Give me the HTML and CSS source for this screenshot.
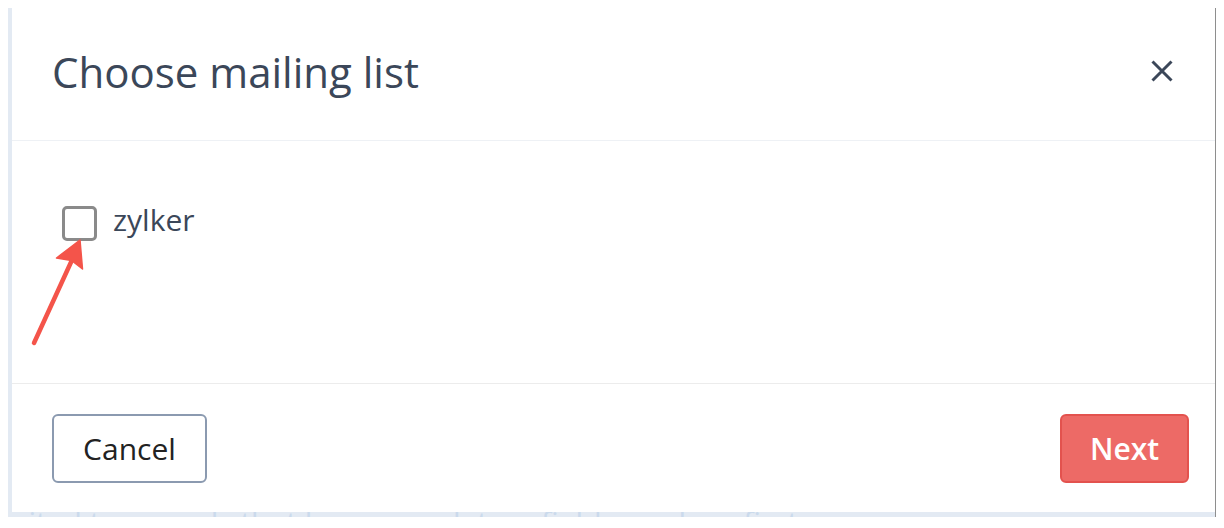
FILE: index.html
```html
<!DOCTYPE html>
<html>
<head>
<meta charset="utf-8">
<link rel="stylesheet" href="styles.css">
</head>
<body>
<div class="frame">
  <div class="page">
    <p class="page-text">nited to records that have mandatory fields, such as first name</p>
  </div>
  <div class="modal">
    <div class="modal-header">
      <h1 class="modal-title">Choose mailing list</h1>
      <svg class="close" width="24" height="24" viewBox="0 0 24 24" aria-label="Close">
        <path d="M2.5 2.5 L21.5 21.5 M21.5 2.5 L2.5 21.5" stroke="#3b4759" stroke-width="3" fill="none"/>
      </svg>
    </div>
    <div class="modal-body">
      <label class="option">
        <span class="checkbox"></span>
        <span class="option-label">zylker</span>
      </label>
    </div>
    <div class="modal-footer">
      <button class="btn btn-cancel">Cancel</button>
      <button class="btn btn-next">Next</button>
    </div>
  </div>
</div>
<svg class="annot" width="120" height="360" viewBox="0 0 120 360">
  <path d="M34 343 L72 260" stroke="#f4544a" stroke-width="4.5" stroke-linecap="round" fill="none"/>
  <polygon points="80,240 56.5,258 71.5,260.5 82.5,269" fill="#f4544a" stroke="#f4544a" stroke-width="1.5" stroke-linejoin="round"/>
</svg>
</body>
</html>
```

FILE: styles.css
```css
html, body {
  background: #ffffff;
}
body {
  margin: 8px;
  font-family: "Open Sans", "Liberation Sans", sans-serif;
}
.frame {
  position: relative;
  width: 1207px;
  height: 509px;
  overflow: hidden;
  background: #e3eaf3;
  box-shadow: 0 0 0 1px #8e8e8e, 0 1px 7px 1px rgba(0, 0, 0, 0.45);
}
.page {
  padding-top: 493px;
  padding-left: 2px;
}
.page-text {
  margin: 0;
  font-size: 30px;
  line-height: 41px;
  color: #cbdaec;
  white-space: nowrap;
}
.modal {
  position: absolute;
  left: 4px;
  top: 0;
  right: 0;
  height: 504px;
  background: #ffffff;
  display: flex;
  flex-direction: column;
}
.modal-header {
  height: 132px;
  border-bottom: 1px solid #eef1f5;
  display: flex;
  justify-content: space-between;
  align-items: flex-start;
  padding: 0 41px 0 40px;
  box-sizing: content-box;
}
.modal-title {
  margin: 35px 0 0 0;
  font-size: 42px;
  font-weight: 400;
  line-height: 57px;
  color: #3b4759;
}
.close {
  margin-top: 51px;
  display: block;
}
.modal-body {
  border-bottom: 1px solid #ececec;
  padding: 65px 0 0 50px;
  box-sizing: border-box;
  height: 243px;
}
.option {
  display: flex;
  align-items: flex-start;
  gap: 16px;
}
.checkbox {
  width: 35px;
  height: 35px;
  box-sizing: border-box;
  border: 3px solid #8a8a8a;
  border-radius: 5px;
  background: #fff;
}
.option-label {
  margin-top: -7px;
  font-size: 30px;
  line-height: 41px;
  color: #3b4759;
}
.modal-footer {
  flex: 1;
  display: flex;
  justify-content: space-between;
  align-items: flex-start;
  padding: 30px 26px 0 40px;
}
.btn {
  height: 69px;
  box-sizing: border-box;
  border-radius: 6px;
  font-family: "Open Sans", "Liberation Sans", sans-serif;
  font-size: 30px;
  padding: 0;
  display: flex;
  align-items: center;
  justify-content: center;
}
.btn-cancel {
  width: 155px;
  background: #ffffff;
  border: 2px solid #8b9ab0;
  color: #222222;
}
.btn-next {
  width: 129px;
  background: #ed6a66;
  border: 2px solid #e3524e;
  color: #ffffff;
  font-weight: 600;
}
.annot {
  position: absolute;
  left: 0;
  top: 0;
}
```
